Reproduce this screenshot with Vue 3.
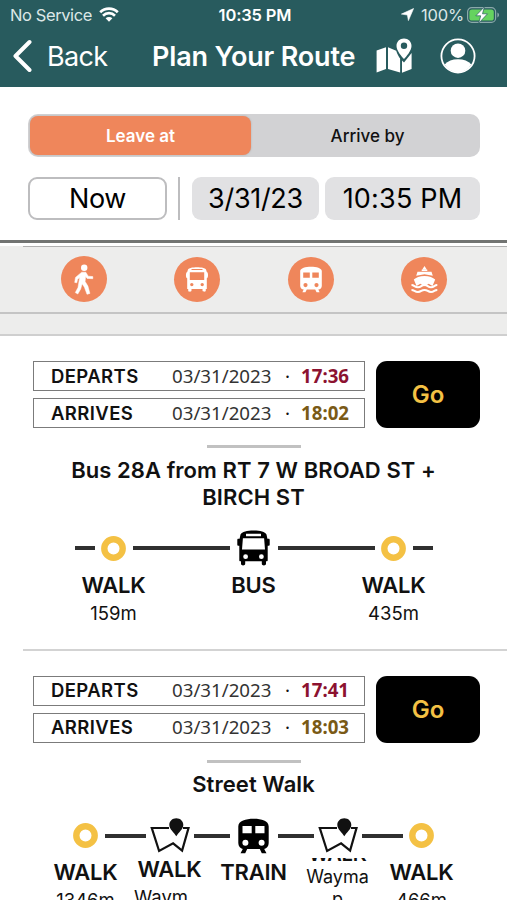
<script setup>
const modes = ['walk', 'bus', 'train', 'ferry']

const routes = [
  {
    id: 1,
    departs: '17:36',
    arrives: '18:02',
    title: 'Bus 28A from RT 7 W BROAD ST + BIRCH ST',
    wide: true,
    steps: [
      { icon: 'ring', label: 'WALK', detail: '159m' },
      { icon: 'bus', label: 'BUS', detail: '' },
      { icon: 'ring', label: 'WALK', detail: '435m' },
    ],
  },
  {
    id: 2,
    departs: '17:41',
    arrives: '18:03',
    title: 'Street Walk',
    wide: false,
    steps: [
      { icon: 'ring', label: 'WALK', detail: '1346m' },
      { icon: 'map', label: 'WALK', detail: 'Waym', variant: 'raised' },
      { icon: 'train', label: 'TRAIN', detail: '' },
      { icon: 'map', label: 'WALK', detail: 'Wayma p', variant: 'clipped' },
      { icon: 'ring', label: 'WALK', detail: '466m' },
    ],
  },
]
</script>

<template>
  <div class="screen">
    <header class="header">
      <div class="status">
        <div class="status-left">
          <span class="carrier">No Service</span>
          <svg class="wifi" viewBox="0 0 20 15">
            <path d="M1.200 5.200a12.600 12.600 0 0 1 17.600 0M4 8.700a8.500 8.500 0 0 1 12 0" fill="none" stroke="#fff" stroke-width="2.700" />
            <path d="M6.600 11.300a4.900 4.900 0 0 1 6.800 0L10 14.800z" fill="#fff" />
          </svg>
        </div>
        <span class="clock">10:35 PM</span>
        <div class="status-right">
          <svg class="arrow" viewBox="0 0 13 13"><path d="M12.600.5 7.400 12.600 6.400 7 .4 6.100z" fill="#fff" stroke="#fff" stroke-width=".6" stroke-linejoin="round" /></svg>
          <span class="percent">100%</span>
          <svg class="battery" viewBox="0 0 33 18">
            <rect x=".6" y="1.600" width="28" height="14.800" rx="4.200" fill="none" stroke="#8ba9aa" stroke-width="1.200" />
            <rect x="2.400" y="3.400" width="24.400" height="11.200" rx="2.600" fill="#65d35f" />
            <path d="M30.400 6.600c2.200.7 2.200 4.100 0 4.800z" fill="#8ba9aa" />
            <path d="M17.400.8 8.800 9.800h4.900l-2 7.400 8.800-9.400h-5z" fill="#fff" stroke="#285b5e" stroke-width=".7" />
          </svg>
        </div>
      </div>
      <nav class="nav">
        <button class="back">
          <svg viewBox="0 0 20 34"><path d="M17.500 3 3.500 17l14 14" fill="none" stroke="#fff" stroke-width="4" stroke-linecap="round" stroke-linejoin="round" /></svg>
          <span>Back</span>
        </button>
        <h1>Plan Your Route</h1>
        <svg class="nav-map" viewBox="0 0 36 36">
          <path d="M.6 12.600 10 9.200v21.900L.6 34.600zM12 9.200l8.200 3.500c.8 3 2.900 6.300 3.900 7.900v14L12 31.100z" fill="#fff" />
          <path d="M26 22.500 28 24.500l7.600-9.500v16.100L26 34.800z" fill="#fff" />
          <path fill-rule="evenodd" d="M28 .5c4.300 0 7.500 3.200 7.500 7.400 0 4.700-5.300 10.600-7.500 13.100-2.200-2.500-7.500-8.400-7.500-13.100C20.500 3.700 23.700.5 28 .5zm0 4a3.200 3.200 0 1 0 0 6.400 3.200 3.200 0 0 0 0-6.400z" fill="#fff" />
        </svg>
        <svg class="nav-user" viewBox="0 0 36 36">
          <circle cx="18" cy="18" r="16.600" fill="none" stroke="#fff" stroke-width="1.800" />
          <circle cx="18" cy="12.700" r="7.300" fill="#fff" />
          <path d="M4.600 26.500c3-3.600 7.800-5.300 13.400-5.300s10.400 1.700 13.400 5.300A16 16 0 0 1 18 34.200 16 16 0 0 1 4.600 26.500z" fill="#fff" />
        </svg>
      </nav>
    </header>

    <section class="filters">
      <div class="segmented">
        <button class="segment active">Leave at</button>
        <button class="segment">Arrive by</button>
      </div>
      <div class="when">
        <button class="now">Now</button>
        <i class="bar"></i>
        <button class="pill date">3/31/23</button>
        <button class="pill time">10:35 PM</button>
      </div>
    </section>

    <section class="modes">
      <div class="modes-rule"></div>
      <div class="mode-row">
        <button v-for="mode in modes" :key="mode" class="mode" :class="mode">
          <svg v-if="mode === 'walk'" viewBox="0 0 46 46">
            <circle cx="23.200" cy="11.700" r="3.200" fill="#fff" />
            <path d="M20.700 16.200h4.100l2.400 4 4.600.4v2.100l-5.700-.3-1.500-1.900-.5 5 2.800 4.600 2 7.300-2.900.9-2.600-7.100-2.300-3.400-1.400 5.200-2.900 5-2.500-1.400 2.700-5.100 1.700-10-2.100 1.700-.8 3.600-2.100-.4.8-5z" fill="#fff" stroke="#fff" stroke-width=".5" stroke-linejoin="round" />
          </svg>
          <svg v-else-if="mode === 'bus'" viewBox="0 0 46 46">
            <path fill-rule="evenodd" d="M14 12.500c1.500-3 16.500-3 18 0l.8 2.500c1.600.3 1.700 6 0 6.300V32h-1v1.500c0 1.600-3.300 1.600-3.300 0V32h-11v1.500c0 1.600-3.300 1.600-3.300 0V32h-1V21.300c-1.700-.3-1.600-6 0-6.300zm3.500-.5v1.100h11V12zm-1.700 3.200v7.800h14.400v-7.800zm2 10.700a1.700 1.700 0 1 0 0 3.400 1.700 1.700 0 0 0 0-3.400zm10.400 0a1.700 1.700 0 1 0 0 3.400 1.700 1.700 0 0 0 0-3.400z" fill="#fff" />
          </svg>
          <svg v-else-if="mode === 'train'" viewBox="0 0 46 46">
            <path fill-rule="evenodd" d="M12.200 14c0-5.800 21.600-5.800 21.600 0v15c0 2-1.500 3.400-3.500 3.400l1.300 2.800h-3l-1.400-2.800h-8.400l-1.400 2.800h-3l1.300-2.800c-2 0-3.500-1.400-3.500-3.400zm3 1.500v5.300h6.600v-5.300zm9.100 0v5.300h6.500v-5.300zM17.500 26a2.100 2.100 0 1 0 0 4.200 2.100 2.100 0 0 0 0-4.200zm11 0a2.100 2.100 0 1 0 0 4.200 2.100 2.100 0 0 0 0-4.200z" fill="#fff" />
          </svg>
          <svg v-else viewBox="0 0 46 46">
            <path d="m23.500 9 2.400 3.800h-4.800zM16.500 14.800h14l1.300 4-8.300-1.600-8.300 1.600z" fill="#fff" />
            <path d="M20.700 12.600h5.600v1.400h-5.600z" fill="#fff" />
            <path d="M12.800 22.500c2-2 6-3.600 10.700-3.600s8.700 1.600 10.700 3.600l-2.700 6.500-3.800-2.200-4.200 2.400-4.200-2.400-3.800 2.200z" fill="#fff" />
            <path d="M10.500 28c3 0 3 2.300 6.500 2.300s3-2.300 6.500-2.300 3 2.300 6.500 2.300 3-2.300 6.300-2.300M10.500 32.900c3 0 3 2 6.500 2s3-2 6.500-2 3 2 6.500 2 3-2 6.300-2" fill="none" stroke="#fff" stroke-width="2" />
          </svg>
        </button>
      </div>
      <div class="modes-foot"></div>
    </section>

    <main>
      <article v-for="route in routes" :key="route.id" class="route" :class="{ wide: route.wide }">
        <div class="summary">
          <div class="times">
            <div class="time-row departs">
              <b class="name">DEPARTS</b><span class="day">03/31/2023</span><span class="dot">·</span><strong>{{ route.departs }}</strong>
            </div>
            <div class="time-row arrives">
              <b class="name">ARRIVES</b><span class="day">03/31/2023</span><span class="dot">·</span><strong>{{ route.arrives }}</strong>
            </div>
          </div>
          <button class="go">Go</button>
        </div>
        <div class="short-rule"></div>
        <h2>{{ route.title }}</h2>
        <div class="timeline">
          <div v-for="(step, i) in route.steps" :key="i" class="step" :class="step.variant">
            <div class="track">
              <i class="line before"></i>
              <span class="glyph" :class="step.icon">
                <svg v-if="step.icon === 'ring'" width="25" height="25" viewBox="0 0 25 25">
                  <circle cx="12.500" cy="12.500" r="9.200" fill="none" stroke="#f4c144" stroke-width="6.400" />
                </svg>
                <svg v-else-if="step.icon === 'bus'" width="33" height="36" viewBox="0 0 33 36">
                  <path fill-rule="evenodd" d="M3.500 4.500C5 1.500 10 .4 16.500.4S28 1.500 29.500 4.500l.9 4.300h1.200c.8 0 1.100.5 1.100 1.200v4.500c0 .8-.4 1.300-1.200 1.300h-.8v14.400c0 .7-.4 1.100-1.100 1.100h-.6v2.500c0 2.200-4.200 2.200-4.200 0v-2.500H8.200v2.500c0 2.200-4.200 2.200-4.200 0v-2.500h-.6c-.7 0-1.100-.4-1.100-1.100V15.800h-.8c-.8 0-1.200-.5-1.200-1.300V10c0-.7.300-1.200 1.100-1.200h1.200zM9 3.700v2.600h15V3.700zM5.900 8.300 5 19.400h23l-.9-11.100zm2.700 16a2.400 2.400 0 1 0 0 4.800 2.400 2.400 0 0 0 0-4.800zm15.800 0a2.400 2.400 0 1 0 0 4.800 2.400 2.400 0 0 0 0-4.800z" />
                </svg>
                <svg v-else-if="step.icon === 'train'" width="33" height="36" viewBox="0 0 33 36">
                  <path fill-rule="evenodd" d="M1.300 8.500C1.300 2.500 9 .7 16.500.7s15.200 1.800 15.200 7.800v16.500c0 3.400-2 5.500-4.500 5.900l2.300 4.400h-4.700l-2-4.200H10.200l-2 4.200H3.500l2.300-4.400c-2.500-.4-4.500-2.500-4.500-5.900zm4.200-.4v7.200h9.200V8.100zm12.800 0v7.200h9.200V8.100zM8.400 21.700a3 3 0 1 0 0 6 3 3 0 0 0 0-6zm16.200 0a3 3 0 1 0 0 6 3 3 0 0 0 0-6z" />
                </svg>
                <svg v-else width="40" height="36" viewBox="0 0 40 36">
                  <path d="M19 10H1.800l7.300 23 14-7.700 9 7.200L38.500 10H33" fill="none" stroke="#111" stroke-width="2.200" />
                  <path d="M26.300.3c4 0 7 2.900 7 6.700 0 4.300-4.900 7.600-7 11.300-2.100-3.700-7-7-7-11.300 0-3.800 3-6.700 7-6.700z" fill="#111" />
                </svg>
              </span>
              <i class="line after"></i>
            </div>
            <div class="label"><span>{{ step.label }}</span></div>
            <div class="detail">{{ step.detail }}</div>
          </div>
        </div>
      </article>
    </main>
  </div>
</template>

<style>
body {
  margin: 0;
  overflow: hidden;
}
</style>

<style scoped>
* {
  box-sizing: border-box;
}
.screen {
  width: 507px;
  height: 900px;
  overflow: hidden;
  background: #fff;
  color: #111;
  font-family: Inter, 'Liberation Sans', sans-serif;
}
button {
  appearance: none;
  border: 0;
  margin: 0;
  padding: 0;
  background: none;
  color: inherit;
  font: inherit;
}
svg {
  display: block;
  flex: none;
}
.header {
  height: 87px;
  background: #285b5e;
  color: #fff;
}
.status {
  display: grid;
  grid-template-columns: 1fr auto 1fr;
  align-items: center;
  height: 29px;
  padding: 0 7px 0 10px;
  font-size: 16.5px;
  white-space: nowrap;
}
.status-left,
.status-right {
  display: flex;
  align-items: center;
}
.status-left {
  gap: 7px;
  color: #dce7e7;
}
.carrier {
  letter-spacing: -0.4px;
}
.status-right {
  justify-content: flex-end;
  color: #dce7e7;
}
.wifi {
  width: 20px;
  height: 15px;
}
.clock {
  font-weight: 600;
  letter-spacing: -0.15px;
}
.arrow {
  width: 13px;
  height: 13px;
  margin-right: 7px;
}
.percent {
  margin-right: 3px;
  letter-spacing: -0.2px;
}
.battery {
  width: 33px;
  height: 18px;
}
.nav {
  display: flex;
  align-items: center;
  height: 54px;
  padding-left: 12px;
}
.back {
  display: flex;
  align-items: center;
  gap: 15px;
  width: 140px;
  font-size: 27px;
  letter-spacing: -0.7px;
}
.back svg {
  width: 20px;
  height: 34px;
}
h1 {
  width: 224px;
  margin: 0;
  font-size: 27px;
  font-weight: 600;
  letter-spacing: -0.17px;
  white-space: nowrap;
}
.nav-map {
  width: 36px;
  height: 36px;
}
.nav-user {
  width: 36px;
  height: 36px;
  margin-left: 28px;
}
.filters {
  height: 153px;
  padding: 27px 27px 0 28px;
}
.segmented {
  display: flex;
  height: 43px;
  padding: 2px;
  border-radius: 10px;
  background: #d2d2d4;
}
.segment {
  flex: 1;
  padding-left: 6px;
  font-size: 17px;
  font-weight: 500;
}
.segment.active {
  flex: none;
  width: 221px;
  padding-left: 0;
  border-radius: 8px;
  background: #ef865b;
  color: #fff;
  font-weight: 600;
  box-shadow: 0 0 2px #aaa;
}
.when {
  display: flex;
  height: 43px;
  margin-top: 20px;
  color: #000;
  font-size: 27px;
}
.now {
  width: 139px;
  border: 2px solid #bdbdbf;
  border-radius: 9px;
  letter-spacing: -0.4px;
}
.bar {
  width: 2px;
  margin: 0 12px 0 11px;
  background: #bdbdbf;
}
.pill {
  border-radius: 9px;
  background: #e1e1e3;
}
.date {
  width: 127px;
  letter-spacing: -0.3px;
}
.time {
  width: 155px;
  margin-left: 6px;
  letter-spacing: 0.2px;
}
.modes {
  height: 96px;
  border-top: 3px solid #727472;
  background: #ededec;
}
.modes-rule {
  height: 3px;
  background: #fff;
}
.modes-rule::after {
  display: block;
  height: 3px;
  margin-left: 23px;
  border-bottom: 1px solid #b0b0b0;
  content: '';
}
.mode-row {
  display: flex;
  justify-content: space-between;
  align-items: center;
  height: 68px;
  padding: 0 60px 0 61px;
  border-bottom: 2px solid #c4c4c4;
}
.mode {
  width: 46px;
  height: 45px;
  border-radius: 50%;
  background: #ef865b;
}
.mode.walk {
  height: 46px;
}
.mode svg {
  width: 46px;
  height: 46px;
}
.modes-foot {
  height: 22px;
  border-bottom: 2px solid #cfcfcf;
}
.route {
  height: 314px;
  padding-top: 25px;
}
.route.wide {
  height: 314.5px;
}
.route.wide::after {
  display: block;
  height: 2px;
  margin: 17px 0 0 23px;
  background: #d3d3d3;
  content: '';
}
.summary {
  display: flex;
  justify-content: space-between;
  height: 67px;
  padding: 0 27px 0 33px;
}
.times {
  display: flex;
  flex-direction: column;
  justify-content: space-between;
  width: 332px;
}
.time-row {
  display: grid;
  grid-template-columns: 121px 113px 16px 1fr;
  align-items: center;
  height: 30px;
  padding: 0 0 1px 17px;
  border: 1.5px solid #7b7b7b;
  white-space: nowrap;
}
.name {
  font-size: 18.5px;
  font-weight: 600;
  letter-spacing: 0.4px;
}
.day,
.dot,
strong {
  margin-top: -1px;
  font-family: 'Noto Sans', sans-serif;
  font-size: 18.7px;
}
.day {
  color: #333;
}
.departs strong {
  color: #8c1230;
}
.arrives strong {
  color: #7a5a16;
}
.go {
  width: 104px;
  border-radius: 11px;
  background: #000;
  color: #f4c144;
  font-size: 24px;
  font-weight: 600;
}
.short-rule {
  width: 94px;
  height: 3px;
  margin: 17px 0 0 207px;
  background: #c1c1c1;
}
h2 {
  margin: 8.5px 60px 0;
  font-size: 22px;
  font-weight: 600;
  letter-spacing: 0.07px;
  line-height: 27px;
  text-align: center;
}
.timeline {
  display: grid;
  grid-template-columns: repeat(5, 84px);
  justify-content: center;
  padding-top: 18px;
}
.wide .timeline {
  grid-template-columns: repeat(3, 140px);
  height: 121px;
}
.step {
  min-width: 0;
  text-align: center;
}
.track {
  display: flex;
  align-items: center;
  height: 39px;
}
.line {
  flex: 1;
  height: 4px;
  background: #303030;
}
.glyph {
  display: flex;
  justify-content: center;
  width: 48px;
}
.glyph.ring {
  width: 38px;
}
.step:first-child .before,
.step:last-child .after {
  visibility: hidden;
}
.wide .step:first-child .before,
.wide .step:last-child .after {
  flex: none;
  visibility: visible;
  width: 20px;
}
.wide .step:first-child .before {
  margin-left: 31px;
}
.wide .step:last-child .after {
  margin-right: 31px;
}
.label {
  height: 32px;
  margin-top: 1px;
  font-size: 22px;
  font-weight: 600;
  letter-spacing: -0.2px;
  line-height: 32px;
}
.detail {
  font-size: 18.5px;
  line-height: 25px;
}
.raised .label {
  margin-top: -2px;
}
.raised .detail {
  padding-right: 17px;
}
.clipped .label {
  display: flex;
  align-items: flex-end;
  justify-content: center;
  height: 4px;
  margin-top: 3px;
  overflow: hidden;
  font-size: 20px;
  line-height: 15px;
}
.clipped .detail {
  width: 66px;
  margin: 4px auto 0;
  font-size: 18px;
  line-height: 22px;
}
</style>
